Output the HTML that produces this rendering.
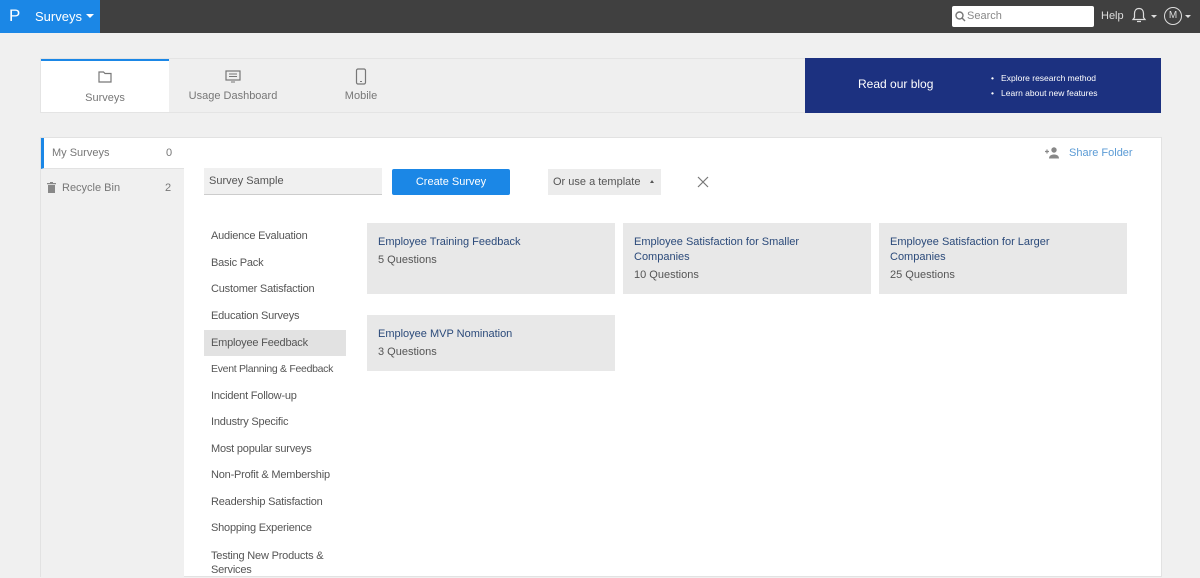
<!DOCTYPE html>
<html><head><meta charset="utf-8"><style>
*{box-sizing:border-box;margin:0;padding:0}
body{width:1200px;height:569px;overflow:hidden;background:#f0f0f0;font-family:"Liberation Sans",sans-serif;font-size:11px;color:#555;position:relative}
.top{position:absolute;left:0;top:0;width:1200px;height:33px;background:#404040}
.brand{position:absolute;left:0;top:0;width:100px;height:33px;background:#1b87e6;color:#fff}
.abs{position:absolute}
.tabs{position:absolute;left:40px;top:58px;width:766px;height:55px;background:#efefef;border:1px solid #e4e4e4}
.tab{position:absolute;top:0;height:53px;text-align:center;color:#777;font-size:11px}
.panel{position:absolute;left:40px;top:137px;width:1122px;height:440px;background:#fff;border:1px solid #e2e2e2}
.side{position:absolute;left:0;top:0;width:143px;height:440px;background:#f0f0f0}
.cat{position:absolute;left:163px;width:142px;height:26px;line-height:26px;padding-left:7px;color:#555;font-size:11px;white-space:nowrap;letter-spacing:-0.2px}
.card{position:absolute;width:248px;background:#e8e8e8;padding:12px 11px;color:#555}
.card b{display:block;font-weight:normal;color:#2b4a7a;font-size:11px;line-height:15px;margin-bottom:4px;width:190px}
</style></head><body>
<div class="top">
 <div class="brand"><span class="abs" style="left:9px;top:6px;font-size:17px">P</span><span class="abs" style="left:35px;top:9px;font-size:13px">Surveys</span><span class="abs" style="left:86px;top:14px;border:4px solid transparent;border-top:4px solid #fff;border-bottom:none"></span></div>
 <div class="abs" style="left:952px;top:6px;width:142px;height:21px;background:#fff;border-radius:2px;color:#888;font-size:11px;padding:4px 0 0 15px">Search
  <svg class="abs" style="left:3px;top:5px" width="11" height="11" viewBox="0 0 11 11"><circle cx="4.5" cy="4.5" r="3.5" fill="none" stroke="#777" stroke-width="1.4"/><path d="M7 7l3 3" stroke="#777" stroke-width="1.4"/></svg></div>
 <span class="abs" style="left:1101px;top:10px;color:#ddd;font-size:11px">Help</span>
 <svg class="abs" style="left:1131px;top:7px" width="16" height="17" viewBox="0 0 16 17"><path d="M8 1.5c-3 0-4.5 2.3-4.5 5v4L2 12.5h12L12.5 10.5v-4C12.5 3.8 11 1.5 8 1.5zM6 14.5h4" fill="none" stroke="#ddd" stroke-width="1.2"/></svg>
 <span class="abs" style="left:1151px;top:15px;border:3px solid transparent;border-top:3px solid #ddd;border-bottom:none"></span>
 <div class="abs" style="left:1164px;top:7px;width:18px;height:18px;border:1.3px solid #ddd;border-radius:50%;color:#ddd;font-size:10px;text-align:center;line-height:16px">M</div>
 <span class="abs" style="left:1185px;top:15px;border:3px solid transparent;border-top:3px solid #ddd;border-bottom:none"></span>
</div>
<div class="tabs">
 <div class="tab" style="left:0;width:128px;background:#fff;border-top:2px solid #1b87e6">
  <svg class="abs" style="left:57px;top:10px" width="14" height="12" viewBox="0 0 14 12"><path d="M1 1h4.5l1.5 1.5H13V11H1z" fill="none" stroke="#777" stroke-width="1.2"/></svg>
  <span class="abs" style="left:0;width:128px;top:31px">Surveys</span></div>
 <div class="tab" style="left:128px;width:128px">
  <svg class="abs" style="left:56px;top:11px" width="16" height="13" viewBox="0 0 16 13"><rect x="1" y="1" width="14" height="9" fill="none" stroke="#777" stroke-width="1.2"/><path d="M4 4h8M4 6.5h8M6 12h4" stroke="#777"/></svg>
  <span class="abs" style="left:0;width:128px;top:31px">Usage Dashboard</span></div>
 <div class="tab" style="left:256px;width:128px">
  <svg class="abs" style="left:58px;top:9px" width="12" height="17" viewBox="0 0 12 17"><rect x="1.5" y="1" width="9" height="15" rx="1.5" fill="none" stroke="#777" stroke-width="1.2"/><path d="M5 13.5h2" stroke="#777"/></svg>
  <span class="abs" style="left:0;width:128px;top:31px">Mobile</span></div>
</div>
<div class="abs" style="left:805px;top:58px;width:356px;height:55px;background:#1c3180;color:#fff">
 <span class="abs" style="left:53px;top:19px;font-size:12px">Read our blog</span>
 <span class="abs" style="left:186px;top:13px;font-size:8.5px;line-height:15px">•&nbsp;&nbsp;&nbsp;Explore research method<br>•&nbsp;&nbsp;&nbsp;Learn about new features</span>
</div>
<div class="panel">
 <div class="side">
  <div class="abs" style="left:0;top:0;width:143px;height:31px;background:#fff;border-left:3px solid #1b87e6;border-bottom:1px solid #e2e2e2"><span class="abs" style="left:8px;top:9px;color:#777">My Surveys</span><span class="abs" style="left:122px;top:9px;color:#777">0</span></div>
  <svg class="abs" style="left:6px;top:44px" width="9" height="11" viewBox="0 0 9 11"><path d="M0 1h9v1.2H0zM3 0h3v1H3zM1 3h7v8H1z" fill="#888"/></svg>
  <span class="abs" style="left:21px;top:44px;color:#777">Recycle Bin</span><span class="abs" style="left:124px;top:44px;color:#777">2</span>
 </div>
 <div class="abs" style="left:163px;top:30px;width:178px;height:27px;background:#f0f0f0;border-bottom:1px solid #ccc;padding:7px 5px;color:#555">Survey Sample</div>
 <div class="abs" style="left:351px;top:31px;width:118px;height:26px;background:#1b87e6;border-radius:2px;color:#fff;text-align:center;line-height:26px">Create Survey</div>
 <div class="abs" style="left:507px;top:31px;width:113px;height:26px;background:#ececec;color:#555;line-height:26px;padding-left:5px">Or use a template<span class="abs" style="left:102px;top:11px;border:2.5px solid transparent;border-bottom:3px solid #555;border-top:none"></span></div>
 <svg class="abs" style="left:656px;top:38px" width="12" height="12" viewBox="0 0 12 12"><path d="M1 1l10 10M11 1L1 11" stroke="#777" stroke-width="1.2"/></svg>
 <svg class="abs" style="left:1004px;top:9px" width="14" height="12" viewBox="0 0 14 12"><path d="M0 4.5h4M2 2.5v4" stroke="#888" stroke-width="1.2"/><circle cx="9" cy="3" r="2.7" fill="#888"/><path d="M4 11.5c0-3 2.5-4 5-4s5 1 5 4z" fill="#888"/></svg>
 <span class="abs" style="left:1028px;top:9px;color:#5b9bd5">Share Folder</span>
 <div class="cat" style="top:85px">Audience Evaluation</div>
 <div class="cat" style="top:112px">Basic Pack</div>
 <div class="cat" style="top:138px">Customer Satisfaction</div>
 <div class="cat" style="top:165px">Education Surveys</div>
 <div class="cat" style="top:192px;background:#e2e2e2">Employee Feedback</div>
 <div class="cat" style="top:218px;font-size:10.5px;letter-spacing:-0.3px">Event Planning &amp; Feedback</div>
 <div class="cat" style="top:245px">Incident Follow-up</div>
 <div class="cat" style="top:271px">Industry Specific</div>
 <div class="cat" style="top:298px">Most popular surveys</div>
 <div class="cat" style="top:324px">Non-Profit &amp; Membership</div>
 <div class="cat" style="top:351px">Readership Satisfaction</div>
 <div class="cat" style="top:377px">Shopping Experience</div>
 <div class="cat" style="top:404px;line-height:14px;padding-top:7px;height:32px;overflow:hidden;white-space:normal">Testing New Products &amp; Services</div>
 <div class="card" style="left:326px;top:85px;height:71px"><b>Employee Training Feedback</b>5 Questions</div>
 <div class="card" style="left:582px;top:85px;height:71px"><b>Employee Satisfaction for Smaller Companies</b>10 Questions</div>
 <div class="card" style="left:838px;top:85px;height:71px"><b>Employee Satisfaction for Larger Companies</b>25 Questions</div>
 <div class="card" style="left:326px;top:177px;height:56px"><b>Employee MVP Nomination</b>3 Questions</div>
</div>
</body></html>
